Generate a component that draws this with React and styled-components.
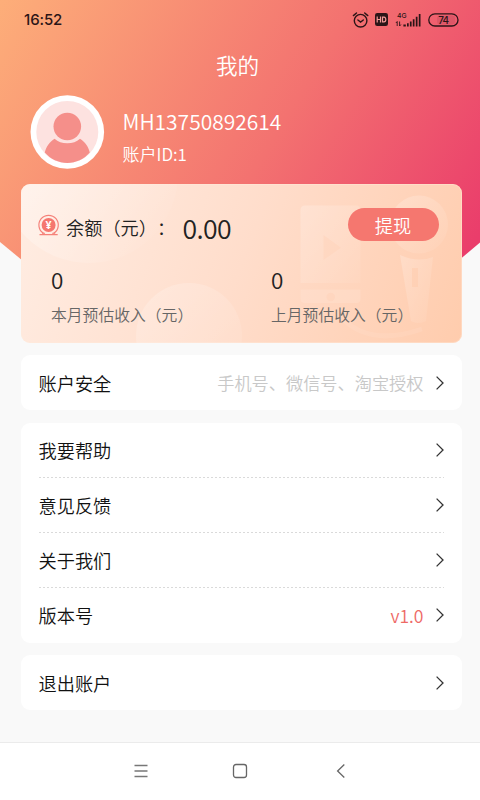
import React from 'react';
import styled, { createGlobalStyle } from 'styled-components';

const GlobalStyle = createGlobalStyle`
  * { box-sizing: border-box; }
  body {
    margin: 0;
    background: #f9f9f9;
    font-family: "Noto Sans CJK SC", "Noto Sans", sans-serif;
    font-weight: 350;
    text-spacing-trim: space-all;
    color: #111;
  }
  svg { display: block; flex: none; overflow: visible; }
`;

const Screen = styled.div`
  position: relative;
  isolation: isolate;
  display: flex;
  flex-direction: column;
  width: 480px;
  height: 800px;
  overflow: hidden;
  background: #f9f9f9;
`;

const HeroBackdrop = styled.div`
  position: absolute;
  z-index: -1;
  inset: 0 0 auto;
  height: 300px;
  background: linear-gradient(121deg, #fdae79 0%, #f37270 54%, #ea3d6b 94%);
  clip-path: polygon(0 0, 100% 0, 100% 242.5px, 461px 258.5px, 420px 290px, 60px 290px, 20px 258.5px, 0 242px);
`;

const StatusBar = styled.div`
  display: flex;
  align-items: center;
  justify-content: space-between;
  height: 39px;
  padding: 0 21px 0 24px;
  color: #2b1517;
`;

const Clock = styled.time`
  font: 500 15px/20px Inter, sans-serif;
  letter-spacing: -0.1px;
`;

const StatusIcons = styled.div`
  display: flex;
  align-items: center;
  gap: 7px;
`;

const Title = styled.h1`
  margin: 11px 0 0;
  padding-right: 5px;
  text-align: center;
  font-size: 21.6px;
  line-height: 30px;
  font-weight: inherit;
  color: #fff;
`;

const Profile = styled.section`
  display: flex;
  gap: 18.5px;
  margin-top: 15px;
  padding-left: 30px;
  height: 89.4px;
  color: #fff;
`;

const ProfileText = styled.div`
  padding-top: 11px;
`;

const UserName = styled.div`
  font-size: 21px;
  line-height: 30px;
`;

const UserId = styled.div`
  margin-top: 6px;
  font-size: 17px;
  line-height: 24px;
`;

const BalanceCard = styled.section`
  position: relative;
  isolation: isolate;
  overflow: hidden;
  width: 441px;
  height: 159px;
  margin-left: 20.5px;
  border-radius: 9px;
  background: linear-gradient(112deg, #ffede3 0%, #ffddcb 50%, #ffccad 100%);
  box-shadow: inset 0 0 0 1px rgba(255, 235, 220, 0.4);
`;

const CardArt = styled.svg`
  position: absolute;
  z-index: -1;
  top: 0;
  left: 0;
`;

const BalanceRow = styled.div`
  display: flex;
  align-items: center;
  height: 40px;
  margin: 21px 23px 0 17.5px;
`;

const BalanceLabel = styled.span`
  width: 116.5px;
  margin-left: 7px;
  padding-top: 3px;
  font-size: 18.2px;
  line-height: 28px;
  color: #222;
  white-space: nowrap;
`;

const Balance = styled.span`
  flex: 1;
  padding-top: 6px;
  font-size: 26.6px;
  line-height: 34px;
  letter-spacing: -0.6px;
  color: #222;
`;

const WithdrawButton = styled.button`
  width: 91px;
  height: 33px;
  margin-bottom: 2px;
  padding: 0;
  border: 0;
  border-radius: 17px;
  background: #f5776f;
  color: #fff;
  font: inherit;
  font-size: 18.2px;
  line-height: 34px;
`;

const Stats = styled.div`
  display: grid;
  grid-template-columns: 220px 1fr;
  padding: 17px 0 0 30.5px;
`;

const StatValue = styled.div`
  font-size: 22.5px;
  line-height: 34px;
  color: #222;
`;

const StatLabel = styled.div`
  margin-top: 7px;
  font-size: 15.8px;
  line-height: 24px;
  color: #666;
  white-space: nowrap;
`;

const Menu = styled.main`
  display: flex;
  flex-direction: column;
  gap: 12.5px;
  padding: 12px 18.5px 0 20.5px;
`;

const MenuCard = styled.section`
  border-radius: 9px;
  background: #fff;
`;

const MenuRow = styled.div`
  display: flex;
  align-items: center;
  height: 55px;
  margin: 0 18px;
  background: ${({ $divided }) =>
    $divided
      ? 'repeating-linear-gradient(90deg, #dadada 0 2.4px, #fff 2.4px 4px) left bottom / 100% 1px no-repeat'
      : 'none'};
`;

const RowLabel = styled.span`
  flex: 1;
  padding-bottom: 0.5px;
  font-size: 18.2px;
  line-height: 28px;
  color: #111;
`;

const RowHint = styled.span`
  margin-right: 12px;
  padding-top: 1px;
  font-size: ${({ $accent }) => ($accent ? '17.6px' : '17.2px')};
  line-height: 26px;
  color: ${({ $accent }) => ($accent ? '#ee6965' : '#c8c8c8')};
`;

const NavBar = styled.nav`
  display: flex;
  align-items: center;
  justify-content: space-between;
  height: 58px;
  margin-top: auto;
  padding: 0 132px 1px;
  border-top: 1px solid #ebebeb;
  background: #fff;
`;

const Chevron = () => (
  <svg width="8" height="14" viewBox="0 0 8 14" fill="none" stroke="#333" strokeWidth="1.3">
    <path d="M.6.6 7 7 .6 13.4" />
  </svg>
);

const AlarmIcon = () => (
  <svg width="16" height="16" viewBox="0 0 16 16" fill="none" stroke="currentColor" strokeWidth="1.4" strokeLinecap="round">
    <circle cx="8.6" cy="8.7" r="6.3" />
    <path d="M5.9 8 8.6 10.1 11.3 8M1.4 3.6 4.5 1M15.8 3.6 12.7 1" />
  </svg>
);

const HdIcon = () => (
  <svg width="13" height="13" viewBox="0 0 13 13">
    <rect width="13" height="13" rx="2.2" fill="currentColor" />
    <path d="M2.2 3.6v5.8M5.5 3.6v5.8M2.2 6.5h3.3M7.5 4.2v4.6H9q1.8 0 1.8-2.3T9 4.2z" fill="none" stroke="#f39a98" strokeWidth="1.2" />
  </svg>
);

const SignalText = styled.text`
  font: 500 6.8px Inter, sans-serif;
`;

const SignalIcon = () => (
  <svg width="26" height="18" viewBox="0 -1 26 18" fill="currentColor">
    <SignalText x="2" y="5.6">4G</SignalText>
    <path d="M8.4 12.6h2.4v1.9H8.4zM12 11.3h1.7v3.2H12zM14.9 9.5h1.7v5h-1.7zM17.8 7.3h1.7v7.2h-1.7zM20.8 4.7h1.7v9.8h-1.7zM23.8 2h1.7v12.5h-1.7z" />
    <path d="M2.2 14V9.5L.9 11M4.6 9.5V14l1.3-1.5" fill="none" stroke="currentColor" strokeWidth=".9" />
  </svg>
);

const BatteryText = styled.text`
  font: 500 10px Inter, sans-serif;
  letter-spacing: -0.8px;
`;

const BatteryIcon = () => (
  <svg width="31" height="14" viewBox="0 0 31 14">
    <rect x="9" y="2.5" width="18" height="9" rx="3" fill="#b4485a" opacity=".3" />
    <rect x=".8" y=".8" width="29.2" height="12.2" rx="6.1" fill="none" stroke="currentColor" strokeWidth="1.3" />
    <BatteryText x="15.2" y="10.6" textAnchor="middle" fill="currentColor">74</BatteryText>
  </svg>
);

const Avatar = () => (
  <svg width="74" height="74" viewBox="0 0 74 74">
    <circle cx="37.3" cy="37" r="36.8" fill="#fff" />
    <circle cx="37.3" cy="37" r="31" fill="#fde2e0" />
    <circle cx="37.3" cy="31.5" r="13.8" fill="#f58f8a" />
    <path d="M24.6 43.8C19.5 47 16 52 14.8 57.6 20.5 64.2 28.5 68 37.3 68s16.8-3.8 22.5-10.4C58.6 52 55.1 47 50 43.8Q45 48.3 37.3 48.3T24.6 43.8z" fill="#f58f8a" />
  </svg>
);

const CoinText = styled.text`
  font: 700 10.5px "Noto Sans", sans-serif;
`;

const CoinIcon = () => (
  <svg width="21" height="21" viewBox="0 0 21 21">
    <circle cx="10.6" cy="10" r="7" fill="#f5776f" />
    <path d="M5.6 18.3A9.7 9.7 0 1 1 15.6 18.3M1.5 19.6H19.7" fill="none" stroke="#f5827a" strokeWidth="1.2" />
    <path d="M4 18.3h3M14.2 18.3h3" stroke="#f5827a" strokeWidth="1" />
    <CoinText x="10.6" y="13.8" textAnchor="middle" fill="#fff">¥</CoinText>
  </svg>
);

const CardDecoration = () => (
  <CardArt width="441" height="159" viewBox="0 0 441 159">
    <defs>
      <linearGradient id="sheen" x1="0" y1="0" x2="1" y2="1">
        <stop offset="0" stopColor="#fff" stopOpacity=".22" />
        <stop offset="1" stopColor="#fff" stopOpacity=".04" />
      </linearGradient>
      <linearGradient id="glow" x1="0" y1="0" x2="1" y2=".7">
        <stop offset="0" stopColor="#fff" stopOpacity=".5" />
        <stop offset="1" stopColor="#fff" stopOpacity=".02" />
      </linearGradient>
    </defs>
    <circle cx="68" cy="-10" r="89" fill="url(#glow)" />
    <circle cx="168" cy="152" r="53" fill="url(#sheen)" />
    <path fillRule="evenodd" fill="url(#sheen)" d="M284 21.5H335Q339.5 21.5 339.5 26V99H279.5V26Q279.5 21.5 284 21.5zM302.5 51V76L320 63.8z" />
    <path fillRule="evenodd" fill="#fff" fillOpacity=".12" d="M279.5 105.5h60V115q0 4-4 4H284q-4.5 0-4.5-4zM305.5 113a4.2 4.2 0 1 0 8.4 0 4.2 4.2 0 1 0-8.4 0" />
    <circle cx="398" cy="40.5" r="29" fill="url(#sheen)" />
    <path fillRule="evenodd" fill="url(#sheen)" d="M379 71q18 8 33 2L405 137q-8 4-15 0zM391 84v19h6V84z" />
    <path d="M324 137Q352 162 401 145" fill="none" stroke="#fff" strokeOpacity=".08" strokeWidth="5" />
  </CardArt>
);

const MENU_GROUPS = [
  [{ label: '账户安全', hint: '手机号、微信号、淘宝授权' }],
  [
    { label: '我要帮助' },
    { label: '意见反馈' },
    { label: '关于我们' },
    { label: '版本号', hint: 'v1.0', accent: true },
  ],
  [{ label: '退出账户' }],
];

export default function App() {
  return (
    <>
      <GlobalStyle />
      <Screen>
        <HeroBackdrop />
        <StatusBar>
          <Clock>16:52</Clock>
          <StatusIcons>
            <AlarmIcon />
            <HdIcon />
            <SignalIcon />
            <BatteryIcon />
          </StatusIcons>
        </StatusBar>
        <Title>我的</Title>
        <Profile>
          <Avatar />
          <ProfileText>
            <UserName>MH13750892614</UserName>
            <UserId>账户ID:1</UserId>
          </ProfileText>
        </Profile>
        <BalanceCard>
          <CardDecoration />
          <BalanceRow>
            <CoinIcon />
            <BalanceLabel>余额（元）：</BalanceLabel>
            <Balance>0.00</Balance>
            <WithdrawButton>提现</WithdrawButton>
          </BalanceRow>
          <Stats>
            <div>
              <StatValue>0</StatValue>
              <StatLabel>本月预估收入（元）</StatLabel>
            </div>
            <div>
              <StatValue>0</StatValue>
              <StatLabel>上月预估收入（元）</StatLabel>
            </div>
          </Stats>
        </BalanceCard>
        <Menu>
          {MENU_GROUPS.map((rows) => (
            <MenuCard key={rows[0].label}>
              {rows.map(({ label, hint, accent }, i) => (
                <MenuRow key={label} $divided={i < rows.length - 1}>
                  <RowLabel>{label}</RowLabel>
                  {hint && <RowHint $accent={accent}>{hint}</RowHint>}
                  <Chevron />
                </MenuRow>
              ))}
            </MenuCard>
          ))}
        </Menu>
        <NavBar>
          <svg width="18" height="18" viewBox="0 0 18 18" stroke="#777" strokeWidth="1.3">
            <path d="M2.5 3.5h13M2.5 9h13M2.5 14.5h13" />
          </svg>
          <svg width="18" height="18" viewBox="0 0 18 18" fill="none" stroke="#666" strokeWidth="1.3">
            <rect x="2.5" y="2.5" width="13" height="13" rx="2.5" />
          </svg>
          <svg width="18" height="18" viewBox="0 0 18 18" fill="none" stroke="#666" strokeWidth="1.3">
            <path d="M14.3 2.5 7.6 9l6.7 6.5" />
          </svg>
        </NavBar>
      </Screen>
    </>
  );
}
